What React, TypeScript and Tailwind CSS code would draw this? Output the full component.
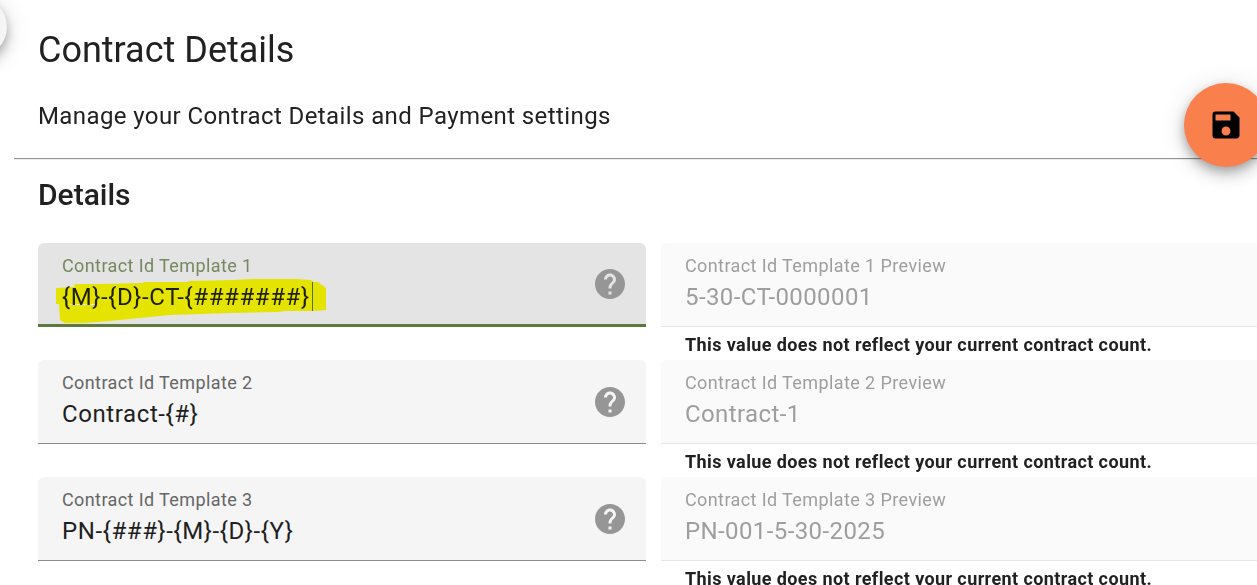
import { MdHelp, MdSave } from 'react-icons/md';
import clsx from 'clsx';

const templates = [
  { id: 1, value: '{M}-{D}-CT-{#######}', preview: '5-30-CT-0000001', active: true },
  { id: 2, value: 'Contract-{#}', preview: 'Contract-1', active: false },
  { id: 3, value: 'PN-{###}-{M}-{D}-{Y}', preview: 'PN-001-5-30-2025', active: false },
];

function Marker() {
  return (
    <svg
      className="pointer-events-none absolute left-4 top-8 mix-blend-multiply"
      width="276"
      height="50"
      viewBox="54 275 276 50"
      aria-hidden="true"
    >
      <path
        fill="#ffff00"
        fillRule="evenodd"
        d="M56 288L74 287L75 284L100 284L143 283L144 282L188 282L189 281L233 280L252 279H296L311 280L314 282H318L322 285L326 288V310L312 311H285L278 312L230 313L200 314L170 315L140 318L110 321L84 323H65L60 320L59 304H56ZM70 304H95V305H70Z"
      />
      <path stroke="#5f7a3d" d="M312.500 282V311" />
    </svg>
  );
}

function TemplateField({ id, value, active }: { id: number; value: string; active: boolean }) {
  return (
    <div
      className={clsx(
        'relative flex h-[84px] items-center rounded-t-md pl-6 pr-[18px]',
        active ? 'border-b-3 border-[#5c783c] bg-[#e4e4e4]' : 'border-b border-[#8c8c8c] bg-[#f5f5f5]'
      )}
    >
      <div className="flex min-w-0 flex-1 flex-col self-start pt-[9px]">
        <label
          htmlFor={`template-${id}`}
          className={clsx('text-lg leading-[27px]', active ? 'text-[#75885f]' : 'text-[#666666]')}
        >
          Contract Id Template {id}
        </label>
        <input
          id={`template-${id}`}
          type="text"
          defaultValue={value}
          className="h-9 w-full bg-transparent text-2xl tracking-wide text-[#1f1f1f] outline-none"
        />
      </div>
      <button type="button" aria-label="Help" className="text-[#969696]">
        <MdHelp className="size-9" />
      </button>
      {active && <Marker />}
    </div>
  );
}

function PreviewField({ id, preview }: { id: number; preview: string }) {
  return (
    <div className="h-[117px]">
      <div className="flex h-[84px] flex-col rounded-t-md border-b border-[#e6e6e6] bg-[#fafafa] px-6 pt-[9px]">
        <label htmlFor={`preview-${id}`} className="text-lg leading-[27px] text-[#9e9e9e]">
          Contract Id Template {id} Preview
        </label>
        <input
          id={`preview-${id}`}
          type="text"
          disabled
          value={preview}
          className="h-9 w-full bg-transparent text-2xl text-[#9e9e9e] outline-none"
        />
      </div>
      <p className="px-6 pt-1 text-lg leading-[27px] font-bold text-[#212121]">
        This value does not reflect your current contract count.
      </p>
    </div>
  );
}

export default function App() {
  return (
    <main className="relative h-screen overflow-hidden bg-white pt-[26px] font-['Roboto',sans-serif] tracking-wide text-[#212121]">
      <button
        type="button"
        aria-label="Toggle menu"
        className="absolute -left-[53px] -top-[3px] size-[60px] rounded-full bg-[#f5f5f5] shadow-[0_4px_8px_rgba(0,0,0,0.2),0_9px_15px_rgba(0,0,0,0.14),0_2px_27px_rgba(0,0,0,0.12)]"
      />

      <header className="px-[38px]">
        <h1 className="text-4xl leading-[48px] tracking-normal">Contract Details</h1>
        <p className="mt-6 text-2xl leading-9">Manage your Contract Details and Payment settings</p>
      </header>

      <hr className="ml-[14px] mt-6 border-t border-b border-t-[#949494] border-b-[#eeeeee]" />

      <button
        type="button"
        aria-label="Save"
        className="absolute -right-[11px] top-[83px] flex size-[84px] items-center justify-center rounded-full bg-[#f97f4d] text-black shadow-[0_4px_8px_rgba(0,0,0,0.2),0_9px_15px_rgba(0,0,0,0.14),0_2px_27px_rgba(0,0,0,0.12)]"
      >
        <MdSave className="size-9" />
      </button>

      <section className="-mr-3 pl-[38px]">
        <h2 className="mt-[11px] text-3xl leading-[48px] font-medium tracking-normal">Details</h2>
        <div className="mt-6">
          {templates.map((t) => (
            <div key={t.id} className="grid grid-cols-2 gap-[15px]">
              <TemplateField id={t.id} value={t.value} active={t.active} />
              <PreviewField id={t.id} preview={t.preview} />
            </div>
          ))}
        </div>
      </section>
    </main>
  );
}
